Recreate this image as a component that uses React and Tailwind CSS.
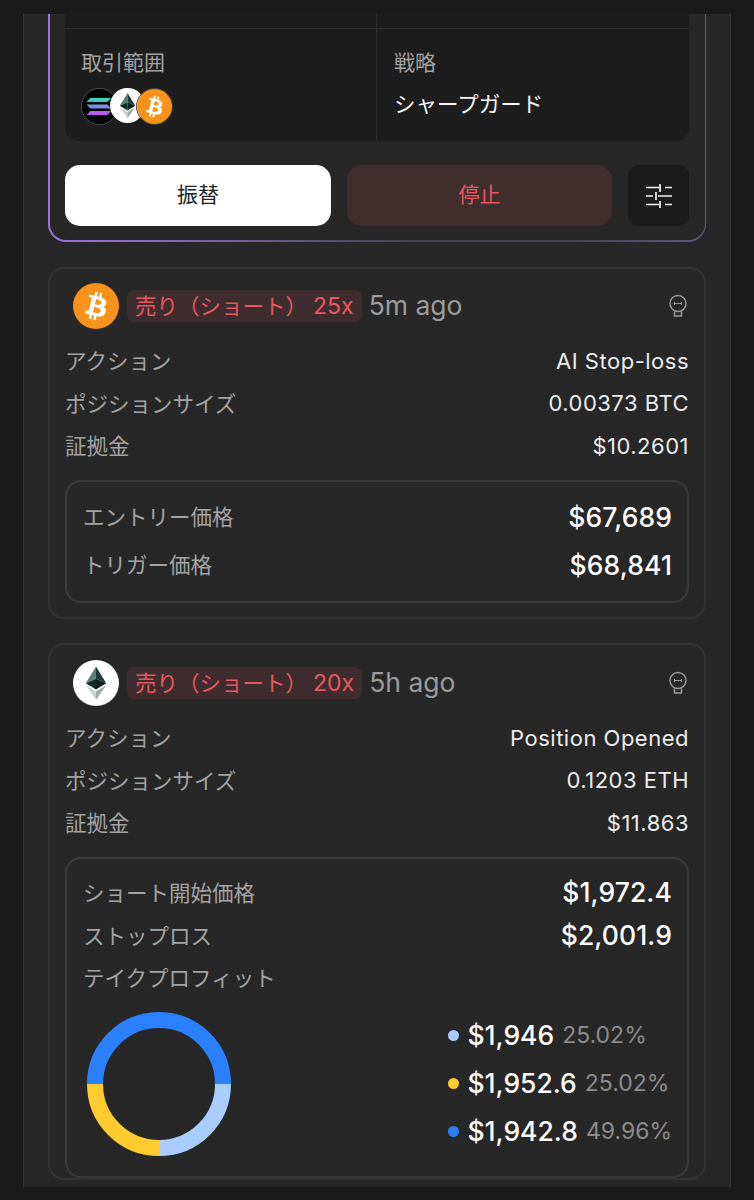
import { Fragment } from 'react';

const FONT = 'font-["Inter","Noto_Sans_CJK_JP",sans-serif]';

const BtcIcon = ({ size }) => (
  <svg width={size} height={size} viewBox="0 0 32 32" className="block">
    <circle cx="16" cy="16" r="16" fill="#f7931a" />
    <path
      fill="#fff"
      d="M23.19 14.02c.31-2.1-1.29-3.24-3.48-3.99l.71-2.85-1.74-.43-.69 2.77c-.46-.11-.93-.22-1.4-.33l.7-2.79-1.74-.43-.71 2.85c-.38-.09-.75-.17-1.11-.26l-2.4-.6-.46 1.85s1.29.3 1.26.31c.7.18.83.64.81 1l-.81 3.24c.05.01.11.03.18.06l-.18-.05-1.13 4.54c-.09.21-.3.53-.79.41.02.03-1.26-.31-1.26-.31l-.86 1.99 2.26.56c.42.11.83.22 1.24.32l-.72 2.88 1.74.43.71-2.85c.48.13.94.25 1.39.36l-.71 2.84 1.74.43.72-2.88c2.97.56 5.2.34 6.14-2.35.76-2.16-.04-3.41-1.6-4.22 1.14-.26 2-1.01 2.23-2.56zm-3.98 5.58c-.54 2.16-4.17.99-5.35.7l.96-3.83c1.18.29 4.95.88 4.39 3.13zm.54-5.61c-.49 1.97-3.51.97-4.49.72l.87-3.47c.98.24 4.13.7 3.62 2.75z"
    />
  </svg>
);

const EthIcon = ({ size }) => (
  <svg width={size} height={size} viewBox="0 0 32 32" className="block">
    <circle cx="16" cy="16" r="16" fill="#fff" />
    <path fill="#5f7d78" d="M16 4.5v8.6L8.9 16.2z" />
    <path fill="#1b3d39" d="M16 4.5l7.1 11.7-7.1-3.1z" />
    <path fill="#0f2f2c" d="M16 13.1v7.4l-7.1-4.3z" />
    <path fill="#08211f" d="M16 13.1l7.1 3.1-7.1 4.3z" />
    <path fill="#c9cfcd" d="M16 21.9v5.7l-7.1-10z" />
    <path fill="#9fa8a6" d="M16 21.9l7.1-4.3-7.1 10z" />
  </svg>
);

const SolIcon = ({ size }) => (
  <svg width={size} height={size} viewBox="0 0 32 32" className="block">
    <defs>
      <linearGradient id="sol" x1="0" y1="0" x2="0" y2="1">
        <stop offset="0" stopColor="#2fe0b0" />
        <stop offset="0.5" stopColor="#7a8fe0" />
        <stop offset="1" stopColor="#c94bf0" />
      </linearGradient>
    </defs>
    <circle cx="16" cy="16" r="16" fill="#050505" />
    <path
      fill="url(#sol)"
      d="M7.5 8.2h19l-3.2 3.6H4.3zM4.3 14.2h19l3.2 3.6h-19zM7.5 20.2h19l-3.2 3.6H4.3z"
    />
  </svg>
);

const SlidersIcon = () => (
  <svg width="26" height="24" viewBox="0 0 26 24" fill="none" stroke="#f2f2f2" strokeWidth="1.7" className="block">
    <path d="M0 3.5h15M19 3.5h7M14 0v8" />
    <path d="M0 12h7M12 12h14M10 8v8" />
    <path d="M0 20.5h15M19 20.5h7M14 17v7" />
  </svg>
);

const BulbIcon = () => (
  <svg width="20" height="24" viewBox="0 0 20 24" fill="none" stroke="#9a9a9a" strokeWidth="1.5" className="block">
    <circle cx="10" cy="9.5" r="8" />
    <path d="M6.5 17.5v4.5h7v-4.5" />
    <path d="M6.5 8v3M13.5 8v3M6.5 9.5h7" strokeWidth="1" />
  </svg>
);

const Row = ({ label, value }) => (
  <div className="flex h-[42.5px] items-center justify-between">
    <span className="text-[21.5px] text-[#a3a3a3]">{label}</span>
    <span className="text-[22px] tracking-[0.5px] text-[#ececec]">{value}</span>
  </div>
);

const BoxRow = ({ label, value, height }) => (
  <div className={`flex items-center justify-between ${height}`}>
    <span className="text-[21.5px] text-[#a3a3a3]">{label}</span>
    <span className="text-[26.5px] font-medium tracking-[0.1px] text-white">{value}</span>
  </div>
);

const LogHeader = ({ icon, lev, ago }) => (
  <div className="flex items-center pl-[8px]">
    {icon}
    <span className="ml-[8px] flex h-[32px] items-center whitespace-pre rounded-[7px] bg-[#3f2c2e] px-[8px] text-[21.5px] text-[#e9585e]">
      売り（ショート） <span className="text-[23px]">{lev}</span>
    </span>
    <span className="ml-[7px] text-[26.5px] text-[#9c9c9c]">{ago}</span>
    <span className="ml-auto pr-[1px]">
      <BulbIcon />
    </span>
  </div>
);

const Donut = () => {
  // 3 segments, clockwise from 9 o'clock
  const r = 64;
  return (
    <svg width="144" height="144" viewBox="0 0 144 144" fill="none" strokeWidth="16" className="block">
      <path d={`M${72 - r} 72A${r} ${r} 0 0 1 ${72 + r} 72`} stroke="#2b80ff" />
      <path d={`M${72 + r} 72A${r} ${r} 0 0 1 72 ${72 + r}`} stroke="#a9cdff" />
      <path d={`M72 ${72 + r}A${r} ${r} 0 0 1 ${72 - r} 72`} stroke="#ffcb2e" />
    </svg>
  );
};

const legend = [
  { dot: 'bg-[#a9cdff]', price: '$1,946', pct: '25.02%' },
  { dot: 'bg-[#ffcb2e]', price: '$1,952.6', pct: '25.02%' },
  { dot: 'bg-[#2b80ff]', price: '$1,942.8', pct: '49.96%' },
];

export default function App() {
  return (
    <div className={`h-[1200px] overflow-hidden bg-[#1a1a1a] pt-[14px] ${FONT}`}>
      <div className="ml-[23px] h-[1173px] w-[708px] overflow-hidden border-x border-[#333333] bg-[#272727] px-[24px]">
        {/* active bot card, scrolled past the top */}
        <div className="rounded-b-[18px] bg-[linear-gradient(90deg,#9b73e0_0%,#7a62ad_25%,#45434f_55%,#45434f_80%,#5e5b86_100%)] pb-[2px] pl-[2px] pr-[1px]">
          <div className="rounded-b-[16px] bg-[#272727] pb-[14px] pl-[15px] pr-[16px]">
            <div className="overflow-hidden rounded-b-[14px] bg-[#1d1d1d]">
              <div className="grid h-[15px] grid-cols-2 border-b border-[#2f2f2f]">
                <div className="border-r border-[#2f2f2f]" />
                <div />
              </div>
              <div className="grid h-[112px] grid-cols-2">
                <div className="border-r border-[#2f2f2f] pl-[16px] pt-[20px]">
                  <div className="text-[21px] leading-[28px] text-[#a3a3a3]">取引範囲</div>
                  <div className="mt-[11px] flex">
                    <span className="rounded-full border border-[#555] bg-[#050505]">
                      <SolIcon size={35} />
                    </span>
                    <span className="-ml-[8px] rounded-full">
                      <EthIcon size={35} />
                    </span>
                    <span className="-ml-[9px] rounded-full border border-[#444]">
                      <BtcIcon size={35} />
                    </span>
                  </div>
                </div>
                <div className="pl-[17px] pt-[20px]">
                  <div className="text-[21px] leading-[28px] text-[#a3a3a3]">戦略</div>
                  <div className="mt-[12px] text-[21.5px] leading-[30px] text-[#f5f5f5]">シャープガード</div>
                </div>
              </div>
            </div>
            <div className="mt-[24px] flex gap-[16px]">
              <button className="h-[61px] w-[266px] rounded-[15px] bg-white pb-[1px] text-[21px] text-[#222]">振替</button>
              <button className="h-[61px] w-[265px] rounded-[15px] bg-[#402d2e] pb-[1px] text-[21px] text-[#e9585e]">停止</button>
              <button className="flex h-[61px] w-[61px] items-center justify-center rounded-[10px] bg-[#1b1b1b]">
                <SlidersIcon />
              </button>
            </div>
          </div>
        </div>

        {/* BTC stop-loss log */}
        <div className="mt-[25px] h-[352px] rounded-[16px] border-2 border-[#333333] px-[15px] pt-[14px]">
          <LogHeader icon={<BtcIcon size={46} />} lev="25x" ago="5m ago" />
          <div className="mt-[11px]">
            <Row label="アクション" value="AI Stop-loss" />
            <Row label="ポジションサイズ" value="0.00373 BTC" />
            <Row label="証拠金" value="$10.2601" />
          </div>
          <div className="mt-[12px] rounded-[16px] border-2 border-[#3a3a3a] pb-[11px] pl-[16px] pr-[15px] pt-[12px]">
            <BoxRow label="エントリー価格" value="$67,689" height="h-[48px]" />
            <BoxRow label="トリガー価格" value="$68,841" height="h-[48px]" />
          </div>
        </div>

        {/* ETH position log */}
        <div className="mt-[24px] rounded-[16px] border-2 border-[#333333] px-[15px] pt-[15px]">
          <LogHeader icon={<EthIcon size={46} />} lev="20x" ago="5h ago" />
          <div className="mt-[11px]">
            <Row label="アクション" value="Position Opened" />
            <Row label="ポジションサイズ" value="0.1203 ETH" />
            <Row label="証拠金" value="$11.863" />
          </div>
          <div className="mt-[12px] h-[321px] rounded-[16px] border-2 border-[#3a3a3a] pl-[16px] pr-[15px] pt-[13px]">
            <BoxRow label="ショート開始価格" value="$1,972.4" height="h-[43px]" />
            <BoxRow label="ストップロス" value="$2,001.9" height="h-[43px]" />
            <div className="flex h-[42px] items-center text-[21.5px] text-[#a3a3a3]">テイクプロフィット</div>
            <div className="mt-[12px] flex items-center justify-between pl-[4px]">
              <Donut />
              <div className="grid grid-cols-[11px_auto] items-center gap-x-[8px]">
                {legend.map((l) => (
                  <Fragment key={l.pct + l.price}>
                    <span className={`h-[11px] w-[11px] rounded-full ${l.dot}`} />
                    <div className="flex h-[48px] items-center">
                      <span className="text-[26.5px] font-medium text-white">{l.price}</span>
                      <span className="ml-[8px] text-[23px] text-[#8c8c8c]">{l.pct}</span>
                    </div>
                  </Fragment>
                ))}
              </div>
            </div>
          </div>
        </div>
      </div>
    </div>
  );
}
